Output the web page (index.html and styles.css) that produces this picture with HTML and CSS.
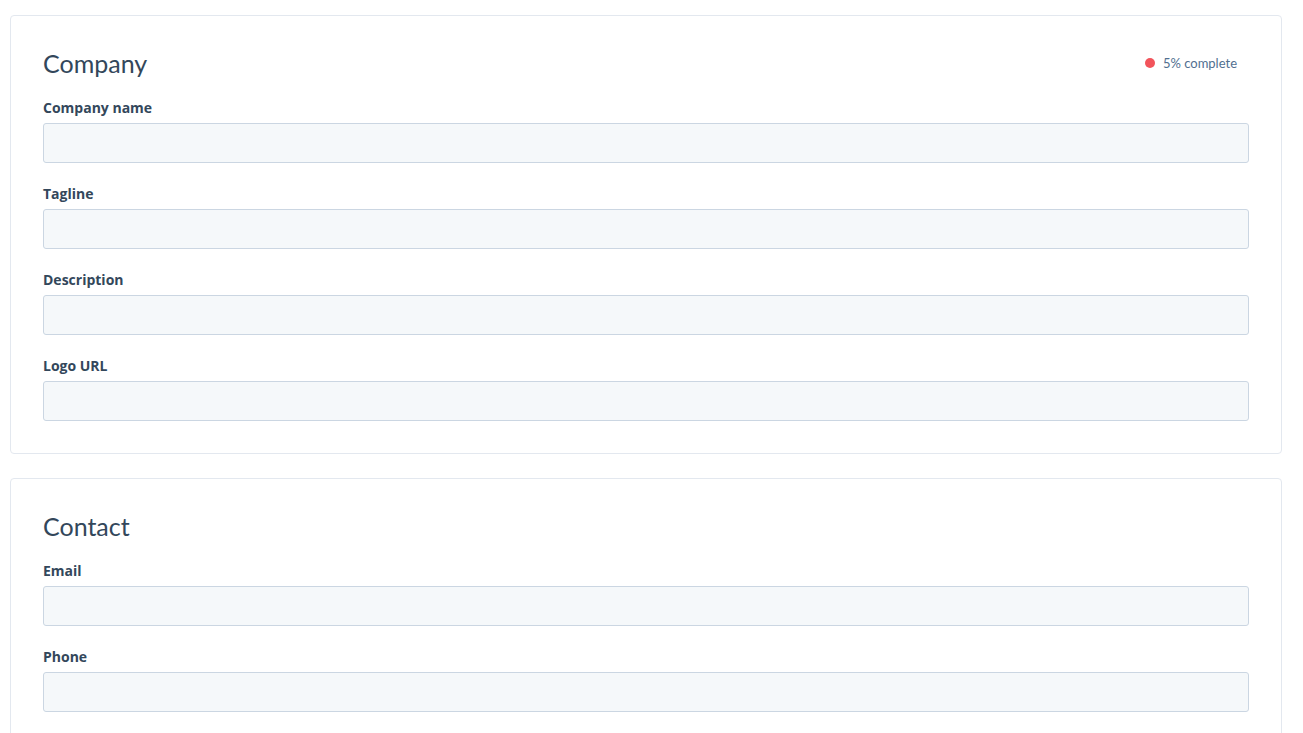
FILE: index.html
```html
<!DOCTYPE html>
<html lang="en">
<head>
    <meta charset="UTF-8">
    <meta name="viewport" content="width=device-width, initial-scale=1.0">
    <title>Profile</title>
    <link rel="stylesheet" href="styles.css">
</head>
<body>
    <div class="pagina">
        <section class="tarjeta">
            <div class="cabecera">
                <h2>Company</h2>
                <span class="progreso"><span class="punto"></span>5% complete</span>
            </div>
            <div class="campo">
                <label>Company name</label>
                <input type="text">
            </div>
            <div class="campo">
                <label>Tagline</label>
                <input type="text">
            </div>
            <div class="campo">
                <label>Description</label>
                <input type="text">
            </div>
            <div class="campo">
                <label>Logo URL</label>
                <input type="text">
            </div>
        </section>

        <section class="tarjeta">
            <div class="cabecera">
                <h2>Contact</h2>
            </div>
            <div class="campo">
                <label>Email</label>
                <input type="text">
            </div>
            <div class="campo">
                <label>Phone</label>
                <input type="text">
            </div>
        </section>
    </div>
</body>
</html>
```

FILE: styles.css
```css
* {
    box-sizing: border-box;
    margin: 0;
    padding: 0;
}
body {
    background-color: white;
    font-family: "Lato", "Open Sans", sans-serif;
    color: #33475b;
}
.pagina {
    padding: 15px 21px 0 10px;
    display: flex;
    flex-direction: column;
    gap: 24px;
}
.tarjeta {
    border: 1px solid #e3e8ef;
    border-radius: 4px;
    padding: 32px;
    display: flex;
    flex-direction: column;
    gap: 21px;
}
.cabecera {
    height: 30px;
    display: flex;
    align-items: center;
    justify-content: space-between;
    margin-bottom: -1px;
}
h2 {
    font-weight: 400;
    font-size: 25px;
    line-height: 30px;
}
.progreso {
    display: flex;
    align-items: center;
    gap: 8px;
    padding-right: 12px;
    font-size: 13px;
    color: #516f90;
}
.punto {
    width: 10px;
    height: 10px;
    border-radius: 50%;
    background-color: #f2545b;
}
.campo {
    display: flex;
    flex-direction: column;
    gap: 5px;
}
.campo label {
    font-family: "Open Sans", "Lato", sans-serif;
    font-size: 14px;
    line-height: 20px;
    font-weight: 700;
}
.campo input {
    height: 40px;
    width: 100%;
    background-color: #f5f8fa;
    border: 1px solid #cbd6e2;
    border-radius: 3px;
    outline: none;
}
```
